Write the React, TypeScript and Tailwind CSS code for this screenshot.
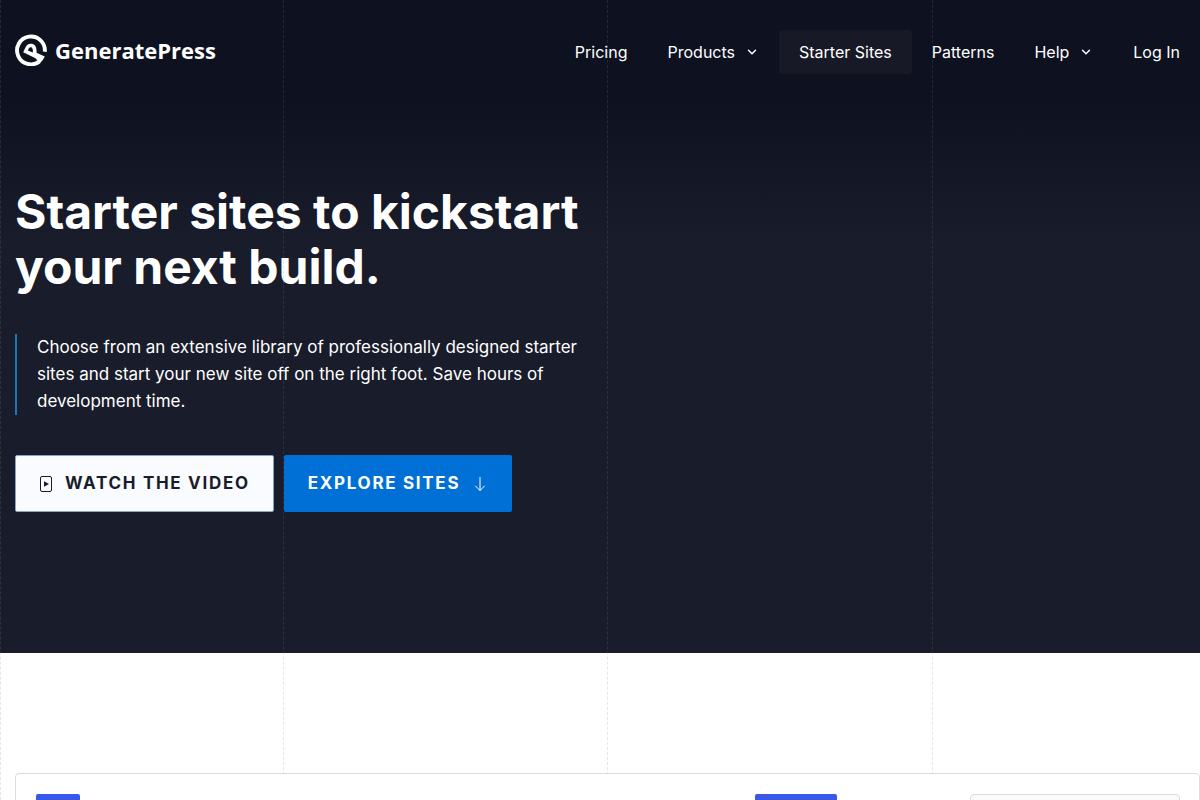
import { ChevronDown } from "lucide-react";

function Logo() {
  return (
    <a href="#home" className="flex items-center gap-2 self-start py-1 font-['Open_Sans','Noto_Sans',sans-serif] text-[22px] leading-8 font-bold text-white">
      <svg viewBox="0 0 32 32" className="size-8" fill="none" aria-hidden="true">
        <path d="M29.8 17.8 A13.9 13.9 0 1 0 24.5 27.4" stroke="currentColor" strokeWidth="3.9" />
        <path
          d="M8.2 18.2 L10.8 12.8 A5.6 5.6 0 0 1 21 13.4 Q21.9 16.2 21.6 18.8 L29.8 22.6 Q28.2 26.6 24.8 29.2 L20.5 24.2 Z M15.8 13.2 Q14.4 13.2 13.8 14.4 L12.9 16.5 L17.8 18.6 Q18.3 13.3 15.8 13.2 Z"
          fill="currentColor"
          fillRule="evenodd"
        />
      </svg>
      GeneratePress
    </a>
  );
}

const navItems = [
  { label: "Pricing" },
  { label: "Products", menu: true },
  { label: "Starter Sites", active: true },
  { label: "Patterns" },
  { label: "Help", menu: true },
  { label: "Log In" },
];

function Navigation() {
  return (
    <nav aria-label="Main" className="flex items-center">
      {navItems.map((item) => (
        <a
          key={item.label}
          href="#nav"
          className={`flex h-11 items-center gap-2.5 rounded-sm px-5 text-base whitespace-nowrap text-white ${item.active ? "bg-[#171926]" : ""}`}
        >
          {item.label}
          {item.menu && <ChevronDown className="size-3.5" strokeWidth={2.5} aria-hidden="true" />}
        </a>
      ))}
    </nav>
  );
}

function GridLines() {
  return (
    <div aria-hidden="true" className="pointer-events-none absolute inset-0 grid grid-cols-[283fr_324fr_325fr_268fr]">
      <span className="border-l border-dashed border-[#80808c]/20" />
      <span className="border-l border-dashed border-[#80808c]/20" />
      <span className="border-l border-dashed border-[#80808c]/20" />
      <span className="border-l border-dashed border-[#80808c]/20" />
    </div>
  );
}

export default function App() {
  return (
    <div className="relative h-screen overflow-hidden bg-white font-[Inter,sans-serif]">
      <div className="bg-[#191c2a] bg-linear-to-b from-[#0e111f] from-[100px] to-[#191c2a] to-[240px] pb-[141px]">
        <header className="flex items-center justify-between pt-[30px] pl-[15px]">
          <Logo />
          <Navigation />
        </header>
        <section className="flex max-w-[620px] flex-col gap-10 px-[15px] pt-[110px]">
          <h1 className="text-[48px] leading-[55px] font-bold text-white">
            Starter sites to kickstart
            <br />
            your next build.
          </h1>
          <p className="border-l-2 border-[#1e73be] pl-5 text-[17px] leading-[27px] text-white">
            Choose from an extensive library of professionally designed starter
            sites and start your new site off on the right foot. Save hours of
            development time.
          </p>
          <div className="flex gap-2.5 text-[17px] font-bold tracking-widest whitespace-nowrap">
            <a href="#video" className="flex h-[57px] items-center gap-2.5 rounded-xs border border-[#89a3c2] bg-[#fafbff] px-[23px] text-[#191c2a]">
              <svg viewBox="0 0 16 16" className="size-4" fill="none" stroke="currentColor" aria-hidden="true">
                <rect x="1.5" y="0.5" width="11" height="15" rx="1.5" />
                <path d="M5 5.2 10 8 5 10.8Z" fill="currentColor" stroke="none" />
              </svg>
              WATCH THE VIDEO
            </a>
            <a href="#sites" className="flex h-[57px] items-center gap-3 rounded-xs bg-[#0170d6] px-6 text-white">
              EXPLORE SITES
              <svg viewBox="0 0 16 16" className="size-4" fill="none" stroke="currentColor" strokeLinecap="round" strokeLinejoin="round" aria-hidden="true">
                <path d="M8 1.5V14.5M3.5 10 8 14.5 12.5 10" />
              </svg>
            </a>
          </div>
        </section>
      </div>
      <GridLines />
      <main className="relative pt-[120px] pl-[15px]">
        <div className="flex h-40 items-start justify-between rounded border border-[#dcdcdc] bg-white pt-5 pr-[19px] pl-5">
          <button aria-label="All" className="h-10 w-11 rounded-xs bg-[#3858e9]" />
          <div className="flex items-start gap-[133px]">
            <button aria-label="Filter" className="h-10 w-[82px] rounded-xs bg-[#3858e9]" />
            <input aria-label="Search" className="h-10 w-[210px] rounded border border-[#dcdcdc] bg-[#fafafa]" />
          </div>
        </div>
      </main>
    </div>
  );
}
